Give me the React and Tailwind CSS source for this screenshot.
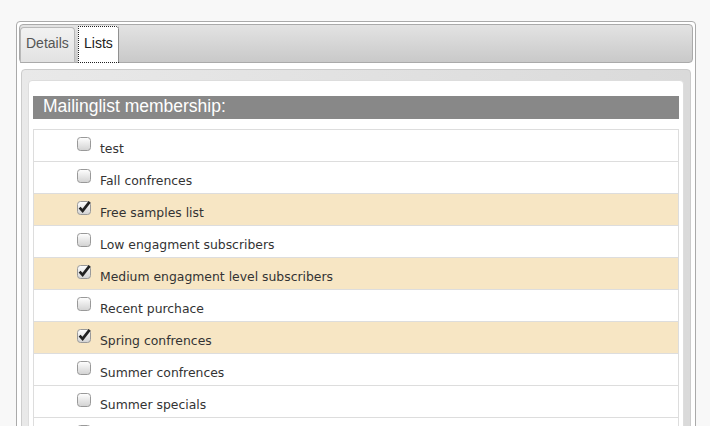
import React from "react";

const lists = [
  { name: "test", on: false },
  { name: "Fall confrences", on: false },
  { name: "Free samples list", on: true },
  { name: "Low engagment subscribers", on: false },
  { name: "Medium engagment level subscribers", on: true },
  { name: "Recent purchace", on: false },
  { name: "Spring confrences", on: true },
  { name: "Summer confrences", on: false },
  { name: "Summer specials", on: false },
  { name: "Winter confrences", on: false },
  { name: "Winter specials", on: false },
];

function Check({ on }) {
  return (
    <svg width="14" height="14" viewBox="0 0 14 14" className="overflow-visible shrink-0">
      <defs>
        <linearGradient id="cbg" x1="0" y1="0" x2="0" y2="1">
          <stop offset="0" stopColor="#ffffff" />
          <stop offset="1" stopColor="#d2d2d2" />
        </linearGradient>
      </defs>
      <rect x="0.5" y="0.5" width="13" height="13" rx="3" fill="url(#cbg)" stroke="#999999" />
      {on && (
        <path d="M2.6 6.6 L5.6 9.8 L12.6 0.8" fill="none" stroke="#222" strokeWidth="2.7" strokeLinejoin="miter" strokeLinecap="butt" />
      )}
    </svg>
  );
}

export default function App() {
  return (
    <div className="h-[426px] overflow-hidden bg-[#f8f8f8] pt-[21px] pl-[16px] font-['Liberation_Sans',sans-serif]">
      <div className="w-[680px] border border-[#aaaaaa] rounded-[4px] bg-white p-[2px]">
        <div className="h-[39px] border border-[#aaaaaa] rounded-[4px] bg-linear-to-b from-[#e3e3e3] to-[#c9c9c9] flex items-end gap-[3px]">
          <div className="w-[55px] h-[36px] -mb-[1px] border border-[#b8b8b8] border-b-[#aaaaaa] rounded-t-[4px] bg-linear-to-b from-[#f2f2f2] to-[#e2e2e2] pt-[7px] pl-[5px] text-[14px] leading-[16px] text-[#555555]">
            Details
          </div>
          <div className="w-[41px] h-[37px] -mb-[1px] border border-dotted border-[#222222] rounded-tr-[3px] bg-white pt-[8px] pl-[5px] text-[14px] leading-[16px] text-[#212121]">
            Lists
          </div>
        </div>
        <div className="mt-[6px] mx-[2px] border border-[#cccccc] rounded-[4px] bg-linear-to-r from-[#e9e9e9] to-[#dadada] pt-[10px] px-[6px] h-[400px]">
          <div className="border border-[#dddddd] rounded-[4px] bg-white px-[4px] pt-[15px] h-[400px]">
            <div className="h-[23px] bg-[#888888] pl-[10px] text-white text-[17.5px] leading-[20px]">
              Mailinglist membership:
            </div>
            <div className="mt-[10px] border border-[#dddddd] font-['DejaVu_Sans',sans-serif]">
              {lists.map((l) => (
                <div
                  key={l.name}
                  className={`h-[32px] border-b border-[#dddddd] flex items-start pl-[43px] ${l.on ? "bg-[#f7e6c4]" : "bg-white"}`}
                >
                  <div className="mt-[7px]">
                    <Check on={l.on} />
                  </div>
                  <span className="ml-[9px] mt-[11px] text-[12.4px] leading-[15px] text-[#333333]">{l.name}</span>
                </div>
              ))}
            </div>
          </div>
        </div>
      </div>
    </div>
  );
}
